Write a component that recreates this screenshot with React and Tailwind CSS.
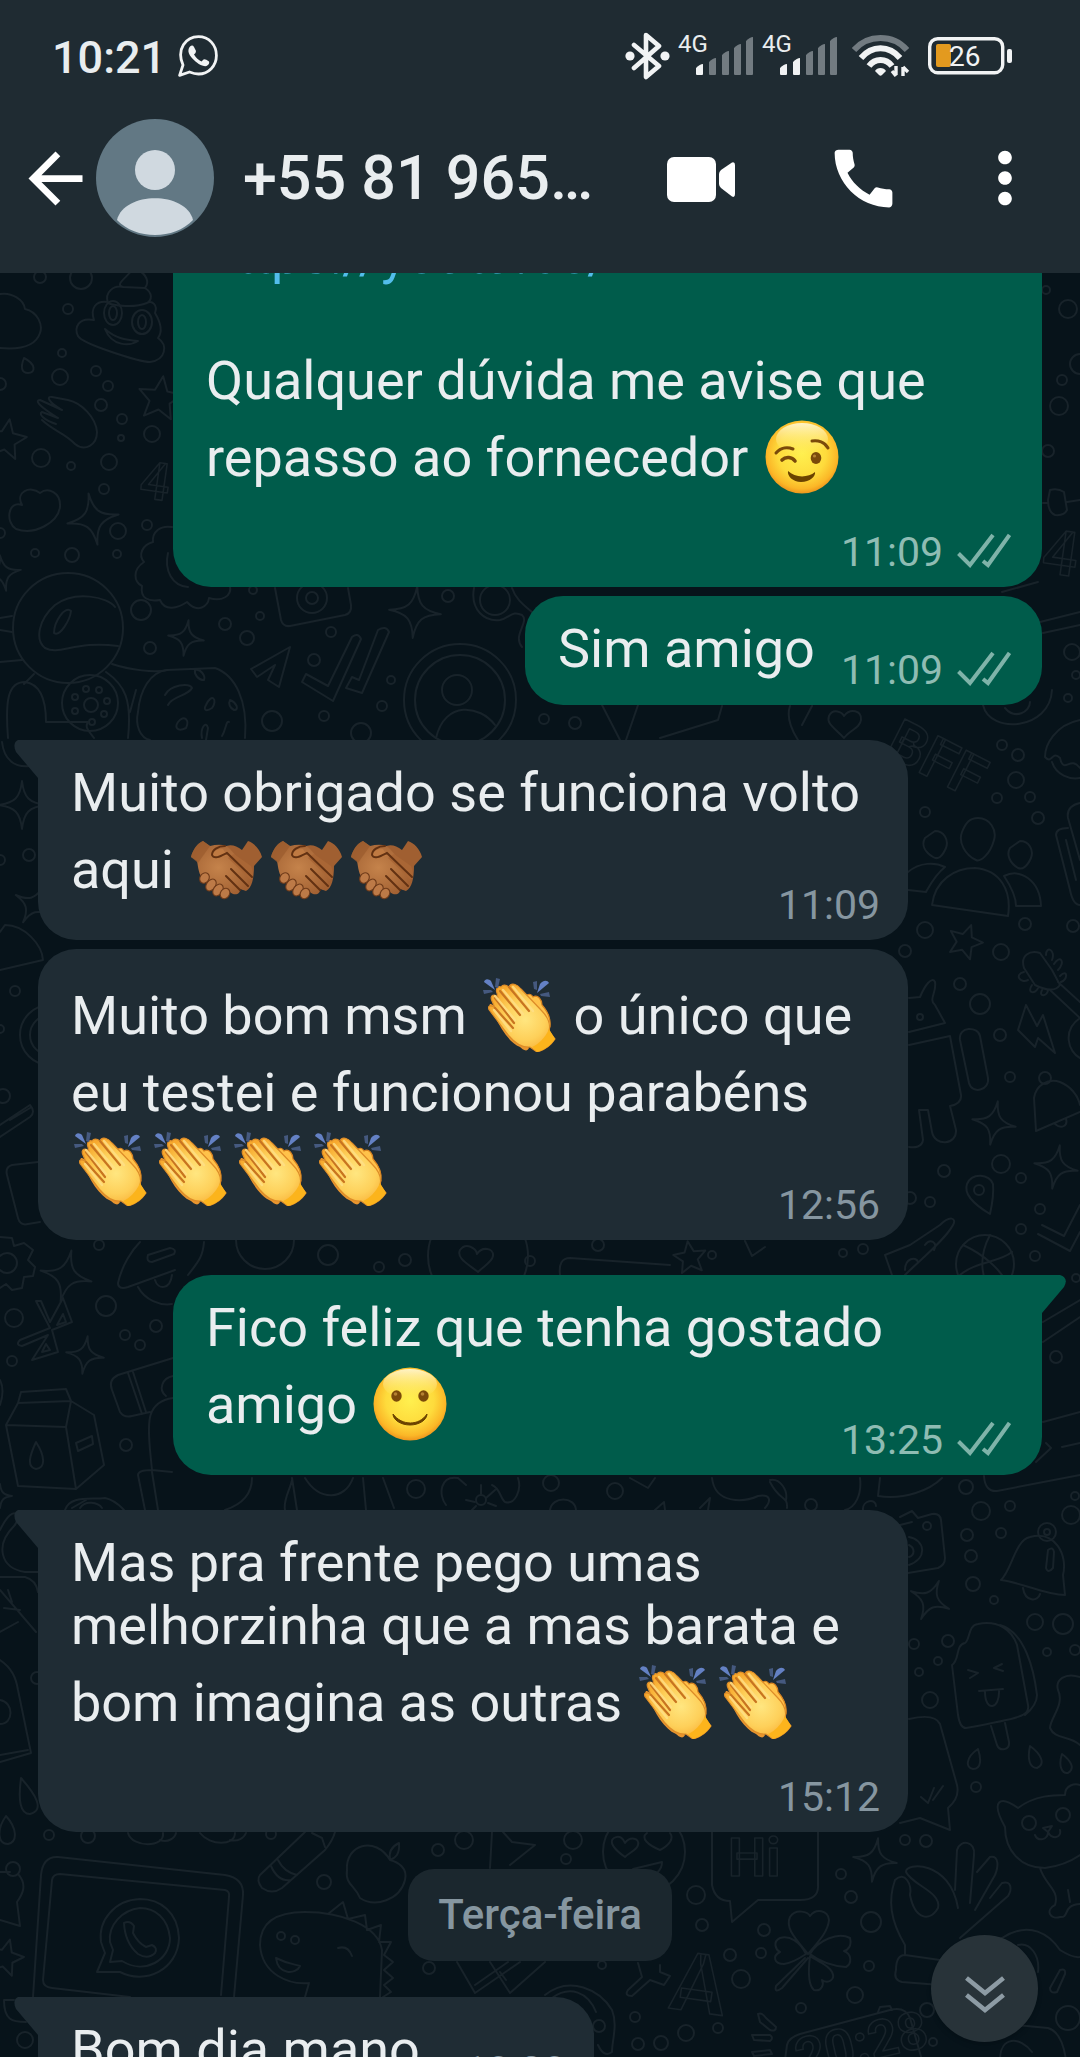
import React from "react";

// React-icons
import { MdArrowBack, MdCall, MdMoreVert } from "react-icons/md";

const RECEIVED = "received";
const SENT = "sent";

// ---------- Emojis ----------

const emojiClass = "mx-[3px] mt-[8px] mb-[9px] inline-block h-[74px] w-[74px] align-[-27px]";

const Wink = () => (
    <svg viewBox="0 0 74 74" className={emojiClass} role="img" aria-label="😉">
        <circle cx="37" cy="37" r="36.5" fill="url(#face)" />
        <ellipse cx="37" cy="19" rx="26" ry="16" fill="url(#shine)" />
        <g fill="none" stroke="#7a4a0a" strokeWidth="3" strokeLinecap="round">
            <path d="M11 33 C16 27 23 27 28 29" />
            <path d="M47 21 C53 20 60 22 63 28" />
            <path d="M17 40 C21 36 27 37 30 41" strokeWidth="3.6" />
        </g>
        <ellipse cx="51" cy="38" rx="5.3" ry="6" fill="#7a4a0a" />
        <circle cx="49.5" cy="36" r="1.6" fill="#b58233" />
        <path d="M23 51 C30 58 43 58 50 52 C51 56 45 62 36 62 C28 62 22 56 23 51Z" fill="#6b4200" />
    </svg>
);

const Smile = () => (
    <svg viewBox="0 0 74 74" className={emojiClass} role="img" aria-label="🙂">
        <circle cx="37" cy="37" r="36.5" fill="url(#face)" />
        <ellipse cx="37" cy="17" rx="27" ry="15" fill="url(#shine)" />
        <ellipse cx="23.5" cy="29" rx="5.2" ry="5.8" fill="#7a4a0a" />
        <ellipse cx="50.5" cy="29" rx="5.2" ry="5.8" fill="#7a4a0a" />
        <circle cx="22.5" cy="27" r="1.8" fill="#b58233" />
        <circle cx="49.5" cy="27" r="1.8" fill="#b58233" />
        <path d="M20 47 C29 59 46 59 54 47 C54 53 46 58 37 58 C28 58 20 53 20 47Z" fill="#6b4200" stroke="#6b4200" strokeWidth="1" strokeLinejoin="round" />
    </svg>
);

const Clap = () => (
    <svg viewBox="0 0 74 74" className={emojiClass} role="img" aria-label="👏">
        <path d="M9 32 C4 27 7 23 12 29 L36 60 L46 70 C44 75 39 71 37 69 C25 64 16 48 9 32Z" fill="#e8952f" />
        <path d="M43 25 C41 16 47 14 50 19 C55 16 59 22 59 27 C66 35 68 41 67 49 L58 56 Z" fill="#ffc24a" stroke="#d98421" strokeWidth="1.2" />
        <path d="M18 9 C20 6 23 7 26 9 C28 4 34 6 38 11 L58 32 C66 40 68 46 66 53 L72 61 C68 67 62 72 54 74 L47 69 C38 70 31 64 26 58 L7 33 C3 28 8 26 12 30 L9 23 C6 17 12 15 15 20 L14 15 C12 10 16 8 18 9Z" fill="url(#hand)" stroke="#dd8c28" strokeWidth="1.2" />
        <path d="M66 51 L72 61 C68 67 62 72 54 74 L49 69 C56 66 62 60 66 51Z" fill="#fcb41c" />
        <g fill="none" stroke="#c87420" strokeWidth="2.2" strokeLinecap="round">
            <path d="M26 9 L46 33" />
            <path d="M17 13 L37 37" />
            <path d="M12 20 L31 45" />
            <path d="M12 30 L30 50" />
        </g>
        <g fill="none" stroke="#ffe08a" strokeWidth="2.4" strokeLinecap="round" opacity=".8">
            <path d="M30 9 L50 33" />
            <path d="M20 12 L40 36" />
            <path d="M12 18 L32 42" />
            <path d="M11 32 L28 53" />
        </g>
        <g fill="#6481c4">
            <path d="M1 4 C2 0 6 1 8 3 L12 12Z" />
            <path d="M66 5 C64 1 59 3 57 6 L54 15Z" />
        </g>
        <g fill="#45597f">
            <path d="M13 0 L17 1 L15 10 L12 9Z" />
            <path d="M0 12 L8 12 L10 14 L1 16Z" />
            <path d="M50 4 L54 3 L54 12 L51 11Z" />
            <path d="M57 16 L66 14 L67 19 L58 18Z" />
        </g>
    </svg>
);

const Handshake = () => (
    <svg viewBox="0 0 74 74" className={emojiClass} role="img" aria-label="🤝🏾">
        <path d="M52 18 L58 9 C64 11 70 17 72 25 L64 34 C64 46 62 56 56 59 L30 50 L28 20 C36 11 44 12 52 18Z" fill="#a05f31" />
        <path d="M1 25 C3 17 8 11 13 9 L20 14 C28 12 36 12 40 17 L60 40 C65 48 60 50 57 48 C61 57 55 60 50 56 C51 63 44 64 40 60 L12 46 C8 40 8 33 7 29Z" fill="url(#shake)" />
        <path d="M1 25 C3 17 8 11 13 9 L20 14 L8 31Z" fill="#9a5b2e" opacity=".7" />
        <path d="M61 34 C65 44 62 48 60 47 L38 26 L44 22Z" fill="#a96635" />
        <path d="M21 23 C24 18 30 16 33 17 L37 24 C32 23 27 30 23 26 C21 25 21 24 21 23Z" fill="#bf7a42" />
        <path d="M35 14 C28 14 22 18 22 23 C24 28 31 24 37 21 L62 45 M41 37 L58 54 M36 44 L50 58" fill="none" stroke="#623112" strokeWidth="2" strokeLinecap="round" />
        <g fill="#bd7a47" stroke="#6f3b1a" strokeWidth="1.1">
            <ellipse cx="14.5" cy="46" rx="4.5" ry="5.5" transform="rotate(35 14.5 46)" />
            <ellipse cx="21" cy="53" rx="4.5" ry="6.5" transform="rotate(35 21 53)" />
            <ellipse cx="28" cy="58" rx="4.5" ry="6.5" transform="rotate(35 28 58)" />
            <ellipse cx="35" cy="61.5" rx="4.5" ry="5.5" transform="rotate(35 35 61.5)" />
        </g>
    </svg>
);

// ---------- Wallpaper ----------

// small bubbles: x, y, radius
const dots = [
    [40, 277, 6], [81, 278, 11], [68, 309, 5], [62, 353, 4], [60, 377, 8], [96, 371, 5], [108, 386, 5], [101, 405, 6],
    [122, 419, 5], [152, 434, 8], [121, 438, 3], [41, 458, 9], [109, 462, 8], [71, 466, 4], [104, 489, 5], [118, 531, 8],
    [147, 525, 5], [35, 553, 4], [72, 555, 7], [117, 554, 4], [0, 384, 6], [0, 533, 5], [141, 610, 10], [150, 648, 6],
    [225, 624, 6], [247, 638, 7], [260, 616, 4], [253, 590, 4], [448, 596, 6], [331, 632, 5], [314, 660, 6], [391, 680, 4],
    [382, 706, 5], [324, 716, 5], [272, 721, 10], [361, 733, 10], [1046, 290, 4], [1068, 309, 9], [1080, 364, 10],
    [1062, 380, 5], [1059, 406, 9], [1048, 451, 6], [1072, 652, 8], [1076, 675, 4], [1068, 698, 4], [544, 719, 5],
    [575, 723, 6], [1002, 745, 5], [1018, 755, 6], [1016, 780, 8], [997, 798, 5], [1030, 797, 5], [925, 812, 5],
    [1038, 818, 6], [925, 930, 8], [1025, 924, 6], [1001, 952, 8], [905, 951, 6], [1073, 926, 6], [960, 984, 6],
    [980, 1004, 10], [1000, 1035, 6], [1010, 1077, 5], [1001, 1164, 9], [1021, 1178, 5], [944, 1171, 6], [930, 1202, 5],
    [1040, 1209, 5], [910, 1198, 6], [1021, 1229, 5], [1035, 1256, 5], [863, 1249, 5], [843, 1253, 4], [29, 855, 6],
    [0, 860, 5], [15, 991, 5], [0, 1029, 4], [3, 1096, 7], [328, 1255, 10], [405, 1260, 6], [379, 1267, 5], [530, 1261, 5],
    [99, 1245, 5], [598, 1245, 6], [712, 1255, 4], [14, 1318, 9], [106, 1306, 10], [125, 1335, 5], [156, 1326, 6],
    [140, 1345, 5], [12, 1361, 5], [126, 1445, 6], [416, 1489, 9], [551, 1483, 8], [615, 1491, 8], [811, 1505, 6],
    [1056, 1357, 6], [1076, 1278, 4], [966, 1487, 7], [981, 1511, 9], [1010, 1506, 5], [1075, 1496, 4], [1071, 1515, 9],
    [967, 1535, 6], [1001, 1533, 5], [971, 1556, 6], [973, 1584, 7], [994, 1600, 4], [1035, 1622, 8], [1063, 1624, 10],
    [914, 1644, 5], [948, 1641, 6], [1047, 1652, 4], [1075, 1650, 5], [930, 1700, 8], [938, 1661, 4], [919, 1672, 4],
    [976, 1787, 5], [37, 1678, 6], [49, 1835, 5], [88, 1836, 7], [324, 1882, 7], [271, 1834, 5], [438, 1850, 6],
    [464, 1840, 9], [429, 1968, 6], [25, 2040, 8], [573, 1840, 9], [566, 1859, 5], [696, 1895, 9], [702, 1925, 6],
    [764, 1930, 6], [730, 1955, 6], [761, 1953, 5], [602, 1965, 4], [741, 1979, 9], [869, 1966, 5], [855, 1995, 8],
    [871, 1922, 10], [841, 1874, 5], [851, 1897, 6], [905, 1840, 5], [926, 1841, 6], [801, 2008, 5], [635, 2017, 5],
    [638, 2044, 6], [661, 2043, 7], [686, 2033, 8], [718, 2028, 5], [599, 2026, 6], [927, 2010, 7], [1068, 2018, 12],
    [933, 2042, 4],
];

// four-pointed sparkles and five-pointed stars: x, y, size, angle
const sparkles = [
    [93, 519, 26, -10], [3, 573, 18, -10], [186, 638, 18, 8], [415, 612, 26, 5], [22, 805, 24, 0], [33, 905, 20, 30],
    [66, 1276, 26, 12], [85, 1355, 19, 8], [994, 1123, 22, 10], [1056, 1167, 22, 10], [930, 1600, 21, 25], [875, 1860, 22, 8],
    [0, 1496, 12, 0],
];
const stars = [[160, 399, 23, 8], [6, 440, 21, 10], [965, 942, 18, 20], [690, 1258, 17, -8], [5, 1958, 19, 15]];

const doodles = [
    // clouds
    "M0 294 C12 292 24 300 25 309 C38 312 43 325 40 333 C36 345 22 350 0 348",
    "M22 505 C8 500 5 522 16 529 C35 536 58 522 60 507 C61 492 48 487 40 493 C30 485 15 492 22 505",
    // smiling pile
    "M123 287 C112 284 134 274 135 264 M145 288 C150 282 146 274 138 270 M108 303 C104 292 114 285 123 287 L145 288 C153 293 152 300 147 303 C135 308 115 306 108 303 M94 320 C90 308 96 300 108 302 M94 320 C78 317 74 328 78 336 C82 344 140 362 150 362 C166 360 168 345 158 338 C164 330 158 318 155 313 C158 305 152 300 147 303 M105 329 C112 347 130 346 138 341 C125 340 115 338 105 329Z",
    "M24 358 C20 368 22 373 28 373 C36 373 36 364 24 358Z",
    // hand
    "M75 444 C85 452 97 445 97 432 C96 418 82 403 68 400 L52 397 C46 396 48 402 62 410 M62 410 L40 400 C35 400 37 405 58 418 M58 418 L42 412 C38 414 44 420 56 424 M42 420 C55 432 65 433 75 444",
    // flower cookie
    "M172 527 C160 525 152 532 153 542 C142 545 138 555 144 562 C132 570 134 582 142 586 C140 598 148 602 160 600 C165 612 178 608 187 602 C198 614 208 606 209 598 C222 602 232 596 230 586 M168 553 C164 570 172 586 188 587",
    // astronaut
    "M115 607 C108 597 75 590 55 605 C38 620 35 640 45 648 C60 656 75 640 118 646 M54 633 C54 622 65 605 71 611 C70 620 60 637 54 633Z M0 662 L22 660 M0 618 L12 616 M0 630 L12 632 M8 738 C5 700 8 682 25 682 C40 684 46 700 46 722 L88 722 C84 728 90 732 94 738 M34 674 L24 684 M106 672 C125 685 132 700 128 738 M112 664 C130 670 155 673 167 670 M130 712 L136 690",
    // glazed cookie
    "M167 670 C150 672 140 690 138 712 C135 725 140 738 150 740 M167 670 L215 668 C235 675 248 700 245 738 M165 695 C170 685 190 682 192 688 C188 696 172 696 168 705 M195 670 C200 668 206 676 204 680 C198 680 194 674 195 670Z M206 705 C212 692 218 700 212 708 C206 712 203 710 206 705Z M230 700 C236 702 240 710 234 710 C230 708 228 704 230 700Z M178 722 C184 714 190 720 186 728 C178 732 174 728 178 722Z M202 738 C200 728 206 720 208 728 L206 740 M222 736 C226 730 226 720 229 722",
    // camera, plane, checks
    "M275 588 L281 620 Q283 627 290 626 L345 615 Q352 613 351 605 L348 588",
    "M251 669 L290 647 L279 687 L268 680 L275 665 L257 677Z",
    "M306 674 L328 686 L352 637 Q358 632 361 639 L333 701 L302 682Z M352 677 L359 680 L378 630 Q386 625 389 632 L362 693 L346 688Z",
    "M436 738 C445 700 480 705 495 725",
    // planet ring
    "M474 588 C470 610 485 622 500 620 C510 618 512 610 522 615 C530 622 512 635 522 647 M512 588 C516 600 525 606 532 612",
    "M602 705 L620 740 M638 705 L626 740 M660 738 L718 720 L722 706 M790 706 C785 720 795 735 798 740 M812 706 L802 725",
    "M844 738 C835 728 826 724 829 716 C833 708 842 712 844 716 C850 708 862 710 861 720 C860 728 850 730 844 738Z",
    // right edge
    "M1050 490 Q1058 488 1064 492 L1067 510 Q1064 516 1055 515 Q1048 512 1048 500Z M1043 503 L1048 503 M1067 502 L1080 500 M1002 592 L1038 582 M1040 622 L1080 612 M1043 633 L1080 625",
    "M983 705 C990 735 1050 730 1052 690 M1005 708 C1015 720 1030 712 1030 702",
    "M1080 720 C1055 725 1045 745 1045 757 C1052 765 1052 750 1060 758 C1064 775 1070 755 1080 768 M1052 762 C1056 775 1070 780 1080 778",
    // people
    "M932 905 C935 880 955 868 975 868 C1000 870 1012 890 1008 916Z M908 872 C920 862 935 862 945 867 C935 875 930 885 926 892 L908 890 M1004 876 C1020 868 1040 880 1041 906 L1016 906 C1016 895 1010 885 1004 876Z",
    "M1080 905 C1075 905 1072 900 1070 890 L1056 835 Q1056 828 1068 828 M1080 803 Q1066 806 1068 818 L1080 860 M1066 840 L1076 880",
    // guitar
    "M1024 968 C1020 955 1030 950 1040 953 L1052 970 L1060 985 C1055 992 1045 990 1035 985Z M1050 990 L1080 1018 M1058 982 L1080 1002 M1046 955 C1046 945 1056 950 1052 960 M1054 964 C1060 954 1066 962 1058 970 M1060 976 C1068 968 1068 980 1061 982 M1024 972 C1014 974 1020 984 1028 980 M1032 985 C1026 994 1036 994 1038 988 M1042 990 C1038 998 1048 996 1048 990 M1080 1018 C1062 1030 1068 1052 1080 1058",
    "M1026 1005 L1018 1030 L1035 1047 L1038 1038 L1055 1053 L1043 1015 L1037 1026Z",
    "M909 998 L920 997 C925 985 932 976 935 982 C937 992 928 1000 935 1005 L945 1023 L909 1032 M909 1045 L950 1036 L961 1095 C962 1103 955 1105 950 1106 L956 1130 C957 1145 935 1147 932 1132 L928 1110 L919 1110 L923 1140 C922 1147 915 1148 909 1147",
    "M960 1040 C958 1026 978 1026 980 1036 L988 1078 C990 1090 972 1095 969 1083Z",
    "M1036 1131 L1034 1098 C1036 1085 1048 1078 1060 1082 C1070 1086 1078 1095 1080 1105 M1036 1131 L1080 1112 M1055 1124 C1062 1130 1068 1125 1066 1119",
    "M990 1214 C975 1205 963 1195 967 1184 C972 1172 990 1174 993 1184 C994 1195 992 1205 990 1214Z",
    "M1042 1225 L1064 1236 L1080 1205 M1038 1234 L1070 1251 L1080 1232",
    "M885 1255 L910 1245 L940 1225 C950 1215 957 1218 953 1225 C945 1240 920 1260 905 1275 M885 1255 L892 1275 M925 1245 C930 1238 938 1242 934 1250 M905 1270 C905 1258 916 1256 918 1262",
    "M963 1245 C985 1255 1000 1270 1005 1280 M960 1275 C975 1262 1000 1262 1012 1252 M990 1235 C982 1250 980 1265 985 1280",
    // left edge
    "M0 970 L43 960 C42 945 25 925 5 925 L0 932 M0 1125 L30 1105 Q36 1112 30 1117 L0 1137 M10 1120 L30 1108 M38 1162 L12 1165 Q5 1167 7 1175 L18 1218 Q20 1226 28 1224 L40 1222",
    "M2 742 C4 760 15 768 30 766",
    "M0 1237 L12 1238 L14 1246 L24 1243 L33 1250 L28 1260 L35 1267 L33 1276 L24 1277 L22 1288 L12 1290 L6 1284 L0 1288",
    "M118 1283 C122 1265 132 1250 140 1242 M118 1283 Q118 1290 128 1287 L175 1270 M204 1242 C203 1255 200 1260 188 1275 M148 1255 L170 1248 Q177 1249 174 1254 L152 1262 Q146 1262 148 1255Z M155 1280 C158 1290 170 1290 172 1275 M138 1287 C145 1300 160 1306 172 1304",
    "M560 1275 Q558 1258 570 1258 L670 1265 M745 1241 L752 1256 L765 1247 M478 1272 C468 1264 456 1258 460 1250 C466 1242 476 1248 477 1254 C482 1246 494 1248 493 1256 C492 1262 484 1266 478 1272Z",
    "M36 1301 L50 1328 L20 1340 Q15 1345 22 1346 L48 1335 L32 1360 L58 1352 L52 1330 L72 1322 L63 1298 L50 1322 L41 1301 Z M57 1325 L63 1314 L66 1322Z M42 1352 L46 1344 L50 1350Z",
    // flashlight and milk box
    "M173 1358 L118 1375 Q108 1380 112 1390 L120 1412 Q124 1418 132 1416 L150 1412 M128 1373 L142 1414 M133 1372 L146 1412 M173 1376 C162 1378 158 1390 166 1396 M173 1398 C145 1402 148 1425 150 1450 L152 1470 L172 1472 M138 1475 Q138 1470 152 1470 M138 1475 L145 1510 M152 1472 L158 1510",
    "M18 1403 L21 1392 L66 1389 L71 1401 L18 1403 L6 1425 L66 1427 L71 1401 L94 1415 L104 1465 L76 1489 L66 1427 M6 1425 L18 1486 L76 1489 M36 1442 C30 1455 26 1467 36 1469 C46 1468 45 1456 36 1442Z M76 1443 L92 1436 L93 1444 L78 1451Z M0 1380 Q5 1390 0 1405",
    "M65 1510 C70 1495 90 1500 105 1498 C115 1500 120 1506 124 1510 M72 1508 L86 1500 M80 1508 C85 1500 98 1502 102 1508",
    "M252 1478 C252 1495 240 1505 225 1510 M292 1478 L297 1510 M285 1510 C283 1500 290 1490 292 1480 M305 1478 C320 1502 345 1500 353 1478 M363 1478 L366 1510 M383 1478 L394 1508",
    "M458 1478 C440 1475 438 1495 446 1505 M458 1478 L466 1485 M518 1478 C522 1490 515 1505 505 1502 C500 1498 500 1488 492 1485 M466 1500 L475 1502 M481 1485 L481 1494 M495 1490 L486 1498 M472 1510 L476 1506 M496 1506 L488 1503",
    "M712 1478 C715 1505 745 1502 758 1496 C770 1494 772 1500 765 1508 M770 1482 C780 1502 788 1495 787 1508 M770 1480 C780 1478 788 1490 786 1500 M860 1478 C862 1495 855 1508 845 1510 M880 1478 L878 1496 C905 1500 930 1490 942 1478 M863 1510 C862 1500 876 1498 876 1506 M630 1478 L648 1488 L655 1478 M550 1510 C552 1496 575 1496 576 1510 M655 1510 L664 1502 L665 1510 M700 1508 L710 1498 L708 1510",
    "M0 1530 C15 1500 22 1518 14 1526 C-5 1545 0 1568 25 1572 L38 1572 M0 1577 L25 1577 Q36 1580 38 1592 M0 1590 L36 1632 M8 1590 L12 1602 M4 1608 L20 1610 M0 1632 L18 1622",
    "M1043 1322 L1080 1300 M1043 1342 L1080 1317 M1043 1422 L1080 1412 M1036 1462 L1051 1448 L1046 1443 M1062 1447 L1080 1443 M984 1476 Q985 1492 997 1491 L1080 1475",
    // camera and bell
    "M900 1517 L912 1511 L918 1518 L932 1514 Q940 1513 941 1520 L945 1558 Q945 1565 938 1568 L908 1573 M900 1525 L912 1522 M909 1537 C925 1540 928 1558 909 1565 M909 1545 C915 1548 915 1555 909 1557",
    "M1001 1580 C1012 1570 1015 1540 1030 1537 C1055 1530 1068 1555 1063 1575 L1065 1595 C1045 1595 1020 1582 1001 1580Z M1023 1588 C1025 1602 1038 1602 1040 1594 M1048 1550 Q1053 1546 1054 1552 L1053 1568 Q1048 1574 1046 1568Z",
    // ice cream
    "M965 1643 C970 1640 968 1625 978 1624 C998 1620 1012 1630 1017 1645 L1028 1705 C1030 1716 1020 1718 966 1728 Q960 1728 958 1715 L952 1665 C960 1660 955 1645 965 1643Z M1000 1625 C1025 1632 1034 1670 1037 1695 Q1037 1705 1025 1715 M968 1670 L978 1673 L970 1678 M1002 1664 L994 1668 L1003 1671 M979 1691 L1003 1689 M985 1692 C985 1712 1000 1710 999 1690 M991 1726 L997 1745 C1000 1752 1010 1750 1009 1742 L1005 1723",
    "M1080 1677 C1065 1672 1055 1680 1058 1690 C1065 1705 1050 1718 1050 1728 C1055 1740 1070 1735 1080 1745",
    "M978 1749 C966 1757 965 1768 973 1769 C982 1769 981 1758 978 1749Z M1030 1746 C1027 1760 1030 1768 1037 1768 C1046 1764 1041 1754 1030 1746Z M1062 1754 C1058 1766 1062 1774 1068 1773 C1076 1768 1070 1760 1062 1754Z",
    "M909 1719 Q935 1713 940 1724 L957 1785 Q960 1798 948 1808 L950 1830 L920 1818 L900 1823 M921 1797 L928 1803 L934 1788 M933 1800 L943 1786",
    // cat
    "M1005 1827 C990 1800 1000 1795 1018 1808 C1035 1795 1055 1795 1065 1795 C1065 1785 1075 1783 1080 1785 M1005 1827 C1005 1850 1020 1868 1045 1868 C1060 1866 1070 1862 1080 1855 M1035 1835 C1038 1842 1048 1840 1048 1832 C1052 1840 1062 1838 1060 1830 M1043 1828 L1052 1826 L1048 1832Z M1040 1868 C1045 1885 1060 1890 1055 1905 C1045 1910 1050 1920 1060 1917 C1070 1918 1062 1905 1080 1904 M1068 1890 L1070 1902",
    "M0 1660 C12 1668 16 1678 18 1690 L31 1753 L0 1762 M0 1755 L28 1750 M0 1700 C14 1702 14 1724 0 1724",
    "M21 1778 C18 1800 20 1814 30 1814 C45 1810 36 1795 21 1778Z M6 1816 C-4 1830 -2 1844 8 1844 C18 1842 17 1828 6 1816Z",
    "M128 1833 C132 1848 165 1848 163 1833 M160 1840 C168 1843 175 1838 176 1833 M200 1833 C210 1846 235 1846 235 1833 M230 1840 C238 1842 244 1838 246 1833",
    // crayon, apple
    "M305 1832 L260 1875 Q256 1880 262 1888 Q272 1895 282 1888 L325 1850 Q333 1840 335 1832 M271 1866 Q278 1882 291 1880 M278 1860 Q284 1872 297 1875 M312 1833 L322 1838 L325 1847",
    "M390 1860 C375 1835 345 1845 347 1870 C345 1885 355 1885 360 1898 C375 1908 400 1900 405 1880 C408 1868 398 1862 390 1860 C388 1850 395 1845 399 1843 C400 1855 395 1858 390 1860",
    "M492 1832 L490 1868 M503 1832 L512 1842 L535 1845 L510 1865",
    // tablet with a chat logo
    "M33 1997 L41 1875 Q43 1856 58 1857 L225 1875 Q244 1878 243 1895 L234 1997 M43 1980 L52 1880 Q53 1874 60 1874 L225 1890 Q230 1891 229 1897 L221 1995 M43 1980 Q43 1987 52 1988 L130 1997",
    "M105 1953 L97 1972 L120 1972 C145 1985 178 1970 179 1938 C178 1912 160 1899 140 1899 C115 1900 98 1920 101 1942 Q103 1948 105 1953Z M113 1950 L110 1962 L122 1961 C145 1975 170 1960 170 1938 C168 1918 155 1908 140 1908 C122 1910 108 1925 110 1942Z M124 1923 Q130 1920 134 1926 L133 1933 Q138 1943 146 1947 L152 1945 Q158 1948 155 1953 Q148 1960 138 1954 Q125 1943 124 1923Z",
    "M0 1872 L10 1872 M18 1874 C28 1885 22 1895 17 1902 L20 1926 L0 1920 M4 2000 C4 2020 12 2022 26 2022 M4 2000 L14 2000",
    // dinosaur
    "M309 1983 C290 1985 262 1975 260 1945 C260 1920 280 1912 305 1912 C340 1912 378 1925 382 1950 L380 1997 M309 1983 L305 1997 M328 1914 L343 1902 L348 1919 L365 1915 L367 1930 L381 1925 L379 1942 L391 1942 L384 1955 L393 1962 L384 1970 L393 1978 L384 1985 L391 1992 L383 1997 M276 1958 C290 1965 295 1964 300 1966 C296 1975 278 1975 276 1958Z M338 1948 Q348 1945 352 1956",
    "M457 1962 L475 1993 L520 1962 M475 1985 L508 1962 M490 1962 L510 1993 L545 1962 M500 1972 L506 1980",
    // smiley with heart eyes
    "M625 1857 C615 1850 608 1842 614 1838 C620 1834 624 1840 625 1843 C630 1836 640 1838 638 1845 C637 1850 630 1852 625 1857Z M660 1850 C648 1845 640 1838 647 1833 M660 1850 C670 1845 674 1838 670 1833 M633 1869 L662 1862 C662 1870 655 1876 650 1876",
    "M712 1832 L712 1885 Q715 1901 730 1901 L732 1922 L758 1900 L800 1900 Q819 1900 818 1885 L818 1832",
    // clover
    "M808 1954 C795 1938 785 1928 790 1917 C796 1908 808 1912 810 1916 C816 1908 828 1910 829 1920 C828 1932 818 1942 808 1954Z M806 1954 C800 1942 790 1935 780 1938 C772 1942 776 1950 780 1952 C772 1956 774 1964 784 1964 C792 1963 800 1958 806 1954Z M810 1954 C818 1940 838 1932 850 1938 C852 1946 848 1950 844 1951 C852 1954 852 1964 846 1967 C830 1966 818 1960 810 1954Z M810 1956 C808 1972 808 1985 814 1990 C822 1992 824 1984 822 1980 C828 1984 836 1980 832 1972 C828 1964 818 1962 810 1956Z M805 1958 L776 1986 Q774 1994 782 1988 L808 1958",
    "M628 1990 L642 1977 L638 1963 M660 1965 L660 1972 L670 1976 L664 1985 L650 1980 L632 1996 Q624 1996 628 1990 M545 1995 C570 1975 600 1990 612 2010 C618 2025 612 2040 612 2052 Q604 2058 598 2045 M552 1998 C570 1985 588 1992 596 2012",
    // ok hand
    "M895 1880 C888 1900 890 1920 905 1945 L905 1955 M895 1880 C905 1870 912 1885 910 1895 C915 1920 930 1922 938 1908 C942 1892 912 1885 906 1872 C905 1862 950 1860 958 1908 M955 1890 L957 1850 C961 1838 976 1842 974 1855 L970 1903 M977 1872 L990 1857 C1000 1855 998 1868 995 1875 L975 1910 M990 1898 L1002 1883 C1012 1880 1012 1890 1008 1896 L960 1938 M940 1960 L905 1955 Q896 1955 896 1970 Q893 1980 902 1982 L940 1985",
    "M785 2060 L787 2045 Q788 2038 800 2034 L890 2010 Q905 2006 910 2018 L922 2060 M878 2012 L880 2007 L890 2006 L892 2010",
    "M758 2014 Q762 2012 766 2018 L776 2027 Q776 2032 770 2030 L760 2022Z M752 2035 L770 2035 Q774 2038 770 2041 L754 2040Z M752 2052 L770 2050 L772 2054 L754 2056Z",
    "M1002 1938 C1030 1920 1050 1935 1060 1950 C1068 1955 1075 1958 1080 1957 M1018 1945 C1030 1942 1040 1955 1038 1972 M1060 1970 Q1066 1968 1065 1974 L1057 1992 Q1050 1994 1050 1988Z M1000 2060 C1000 2036 1020 2036 1032 2052 M1015 2025 L1048 2028 Q1062 2032 1066 2060",
];

const sparklePath = "M0 -1 C.08 -.3 .3 -.08 1 0 C.3 .08 .08 .3 0 1 C-.08 .3 -.3 .08 -1 0 C-.3 -.08 -.08 -.3 0 -1Z";
const starPath = "M0 -1 L.27 -.37 L.95 -.31 L.44 .14 L.59 .81 L0 .46 L-.59 .81 L-.44 .14 L-.95 -.31 L-.27 -.37Z";

const Wallpaper = () => (
    <svg viewBox="0 0 1080 2057" preserveAspectRatio="xMidYMin slice" className="absolute inset-0 h-full w-full" aria-hidden="true">
        <defs>
            <radialGradient id="face" cx=".5" cy=".45" r=".55">
                <stop offset="0" stopColor="#fff04f" />
                <stop offset=".6" stopColor="#fedb3c" />
                <stop offset=".88" stopColor="#fbb727" />
                <stop offset="1" stopColor="#ee951d" />
            </radialGradient>
            <linearGradient id="shine" x1="0" y1="0" x2="0" y2="1">
                <stop offset="0" stopColor="#fff6cf" stopOpacity=".95" />
                <stop offset="1" stopColor="#ffe96a" stopOpacity="0" />
            </linearGradient>
            <radialGradient id="hand" cx=".55" cy=".52" r=".55">
                <stop offset="0" stopColor="#ffe680" />
                <stop offset=".55" stopColor="#fed05a" />
                <stop offset="1" stopColor="#f7a92e" />
            </radialGradient>
            <radialGradient id="shake" cx=".45" cy=".5" r=".6">
                <stop offset="0" stopColor="#c5834b" />
                <stop offset="1" stopColor="#a05f31" />
            </radialGradient>
        </defs>
        <g fill="none" stroke="#18232a" strokeWidth="2" strokeLinejoin="round" strokeLinecap="round">
            {dots.map(([x, y, r], i) => (
                <circle key={i} cx={x} cy={y} r={r} />
            ))}
            {sparkles.map(([x, y, s, a], i) => (
                <path key={i} d={sparklePath} transform={`translate(${x} ${y}) rotate(${a}) scale(${s})`} strokeWidth={2 / s} />
            ))}
            {stars.map(([x, y, s, a], i) => (
                <path key={i} d={starPath} transform={`translate(${x} ${y}) rotate(${a}) scale(${s})`} strokeWidth={2 / s} />
            ))}
            {doodles.map((d, i) => (
                <path key={i} d={d} />
            ))}
            <ellipse cx="113" cy="313" rx="9" ry="12" />
            <ellipse cx="113" cy="313" rx="4" ry="7" />
            <ellipse cx="142" cy="322" rx="10" ry="12" />
            <ellipse cx="142" cy="322" rx="4" ry="7" />
            <circle cx="68" cy="628" r="55" />
            <circle cx="90" cy="703" r="28" />
            <circle cx="91" cy="705" r="7" />
            {[[86, 689], [99, 690], [75, 697], [107, 701], [75, 711], [104, 714], [92, 722]].map(([x, y]) => (
                <circle key={x + "-" + y} cx={x} cy={y} r="3" />
            ))}
            <circle cx="312" cy="598" r="15" />
            <circle cx="312" cy="598" r="6" />
            <circle cx="495" cy="600" r="15" />
            <circle cx="460" cy="700" r="56" />
            <circle cx="460" cy="700" r="45" />
            <circle cx="457" cy="690" r="15" />
            <path d="M978 818 C990 818 997 830 994 840 C990 855 980 862 976 860 C965 855 958 842 962 832 C966 822 970 818 978 818Z M935 831 C944 831 949 840 946 848 C942 857 938 860 933 857 C925 852 921 845 925 838Z M1020 841 C1029 841 1034 850 1031 858 C1027 867 1022 870 1018 868 C1010 863 1006 855 1010 848Z" />
            <circle cx="920" cy="1017" r="3" />
            <circle cx="1045" cy="1078" r="6" />
            <circle cx="979" cy="1190" r="5" />
            <circle cx="985" cy="1264" r="29" />
            <circle cx="50" cy="1035" r="30" />
            <circle cx="50" cy="1035" r="20" />
            <circle cx="7" cy="1263" r="10" />
            <circle cx="265" cy="1240" r="29" />
            <circle cx="478" cy="1256" r="50" />
            <circle cx="481" cy="1500" r="5" />
            <circle cx="927" cy="1526" r="4" />
            <circle cx="1047" cy="1532" r="9" />
            <circle cx="1047" cy="1532" r="3" />
            <circle cx="1029" cy="1823" r="7" />
            <circle cx="1063" cy="1815" r="7" />
            <circle cx="13" cy="1869" r="7" />
            <circle cx="281" cy="1936" r="4" />
            <circle cx="295" cy="1940" r="4" />
            <circle cx="644" cy="1852" r="41" />
            <g className="font-[Roboto,sans-serif] font-bold" strokeWidth="1.6">
                <text x="138" y="497" fontSize="52" transform="rotate(8 138 497)">4</text>
                <text x="1040" y="572" fontSize="62" transform="rotate(8 1040 572)">4</text>
                <text x="883" y="754" fontSize="58" transform="rotate(27 883 754)">BFF</text>
                <text x="728" y="1876" fontSize="54">Hi</text>
                <text x="668" y="2008" fontSize="82" transform="rotate(8 668 2008)">A</text>
                <text x="800" y="2076" fontSize="52" transform="rotate(-13 800 2076)">20:28</text>
            </g>
        </g>
    </svg>
);

// ---------- Header ----------

const Signal = ({ level }) => {
    const bars = [[18, 65], [31, 59], [44, 52], [56, 45], [68, 38]];
    return (
        <svg viewBox="0 0 76 44" className="h-[44px] w-[76px] overflow-visible" aria-hidden="true">
            <text x="0" y="18" fontSize="24" fill="#e9edef" className="font-[Roboto,sans-serif]">4G</text>
            {bars.map(([x, top], i) => (
                <path
                    key={x}
                    d={`M${x} ${top - 31} Q${x + 4} ${top - 35} ${x + 7} ${top - 35} V40 Q${x + 7} 41 ${x + 6} 41 H${x + 1} Q${x} 41 ${x} 40Z`}
                    fill={i < level ? "#f1f3f4" : "#727b81"}
                />
            ))}
        </svg>
    );
};

const StatusBar = () => (
    <div className="flex h-[112px] items-center pl-[52px] pr-[66px] text-[#e9edef]">
        <time className="pt-[3px] text-[45px] leading-none font-medium">10:21</time>
        <svg viewBox="0 0 40 42" className="ml-[12px] h-[42px] w-[40px]" role="img" aria-label="WhatsApp">
            <path d="M1.6 40.4 L5 30 C-2 14 8 1.6 20.500 1.600 C31 1.600 38.400 10 38.400 20.500 C38.400 31 30.500 39 20.500 39 C17 39 14 38 11.500 37Z" fill="none" stroke="#f1f3f4" strokeWidth="2.8" strokeLinejoin="round" />
            <path d="M12 11.500 Q14.500 9.500 16 12 L18 16 Q18 18 16 19.500 Q19 24.500 23.500 26.500 L25.500 24.500 Q27 23.500 31 26.500 Q32 29 28.500 31 Q24 32 17.500 26.500 Q7 17.500 12 11.500Z" fill="#f1f3f4" />
        </svg>
        <div className="ml-auto flex items-center">
            <svg viewBox="0 0 45 48" className="h-[48px] w-[45px]" role="img" aria-label="Bluetooth">
                <path d="M9 13 L34 34 L21 45 V3 L34 14 L9 36" fill="none" stroke="#f1f3f4" strokeWidth="4.600" strokeLinejoin="round" strokeLinecap="round" />
                <circle cx="5" cy="24" r="4.600" fill="#f1f3f4" />
                <circle cx="40" cy="24" r="4.600" fill="#f1f3f4" />
            </svg>
            <div className="ml-2 flex gap-2">
                <Signal level={1} />
                <Signal level={2} />
            </div>
            <svg viewBox="0 0 58 44" className="ml-[14px] h-[44px] w-[58px]" role="img" aria-label="Wi-Fi">
                <g fill="none" strokeWidth="6">
                    <path d="M2 16 C16 0 41 0 55 16" stroke="#727b81" />
                    <path d="M9 24 C20 11 37 11 48 24" stroke="#f1f3f4" />
                    <path d="M17 32 C23 24 34 24 40 32" stroke="#f1f3f4" />
                </g>
                <path d="M23 37 C25 33 32 33 34 37 L30 41 Q28.500 42.500 27 41Z" fill="#f1f3f4" />
                <path d="M44 32 V41 M44 42 L40 37 M51 42 V33 M51 33 L56 38" fill="none" stroke="#f1f3f4" strokeWidth="3.400" />
            </svg>
            <svg viewBox="0 0 86 38" className="ml-[18px] h-[38px] w-[86px]" role="img" aria-label="26%">
                <rect x="1.700" y="1.700" width="73" height="34" rx="8" fill="none" stroke="#f1f3f4" strokeWidth="3.400" />
                <rect x="79" y="12" width="5" height="14" rx="2" fill="#f1f3f4" />
                <rect x="8" y="7" width="15" height="23" rx="2" fill="#e39a1f" />
                <text x="21" y="29" fontSize="28" fill="#f1f3f4" className="font-[Roboto,sans-serif]">26</text>
            </svg>
        </div>
    </div>
);

const ChatHeader = () => (
    <header className="relative z-10 shrink-0 bg-[#1f2b32] pb-[29px]">
        <StatusBar />
        <div className="flex h-[132px] items-center pl-[15px] pr-[34px] text-white">
            <button aria-label="Voltar">
                <MdArrowBack className="size-[81px]" />
            </button>
            <svg viewBox="0 0 118 118" className="size-[118px] shrink-0 rounded-full bg-[#627884]" aria-hidden="true">
                <ellipse cx="59" cy="51" rx="20" ry="20" fill="#d0d9e0" />
                <path d="M21 101 C28 72 90 72 97 101 C78 121 40 121 21 101Z" fill="#d0d9e0" />
            </svg>
            <h1 className="ml-[29px] min-w-0 flex-1 truncate text-[61px] leading-[72px] font-medium text-[#e9edef]">+55 81 965…</h1>
            <button aria-label="Chamada de vídeo">
                <svg viewBox="0 0 68 48" className="h-[48px] w-[68px]">
                    <rect y="3" width="49" height="45" rx="7" fill="currentColor" />
                    <path d="M52 20 Q52 18 54 16 L65 8.500 Q68 7.500 68 11 V40 Q68 44 65 42.500 L54 34 Q52 32 52 30Z" fill="currentColor" />
                </svg>
            </button>
            <button aria-label="Ligar" className="ml-[90px]">
                <MdCall className="size-[77px]" />
            </button>
            <button aria-label="Mais opções" className="ml-[62px]">
                <MdMoreVert className="size-[82px]" />
            </button>
        </div>
    </header>
);

// ---------- Messages ----------

const Checks = () => (
    <svg viewBox="0 0 54 35" className="mb-1 h-[35px] w-[54px]" role="img" aria-label="Entregue">
        <path d="M1.500 20.500 L13 32 L36 2 M26 28 L31 32 L52.500 2" fill="none" stroke="#7fb3a9" strokeWidth="4" />
    </svg>
);

const Tail = ({ from }) =>
    from === SENT ? (
        <svg viewBox="0 0 24 38" className="absolute top-0 left-full h-[38px] w-[24px] text-[#005c4b]" aria-hidden="true">
            <path d="M-1 0 H18 Q27 3 22 12 L0 38 H-1Z" fill="currentColor" />
        </svg>
    ) : (
        <svg viewBox="0 0 24 38" className="absolute top-0 right-full h-[38px] w-[24px] text-[#1f2c34]" aria-hidden="true">
            <path d="M25 0 H4 Q-2 3 2 12 L24 38 H25Z" fill="currentColor" />
        </svg>
    );

const Time = ({ from, className = "", children }) => (
    <span className={`flex items-center justify-end gap-[14px] text-[41px] leading-[48px] ${from === SENT ? "text-[#8fbcb3]" : "text-[#8696a0]"} ${className}`}>
        <time>{children}</time>
        {from === SENT && <Checks />}
    </span>
);

// layout: "inline" puts the time next to a one-line text, "below" gives it a row,
// otherwise it floats at the end of the last line
const Bubble = ({ from, time, tail, layout, className = "", children }) => {
    const side = from === SENT ? "self-end bg-[#005c4b] pr-[31px]" : "self-start bg-[#1f2c34] pr-[28px]";
    const width = layout === "inline" ? "flex items-end" : from === SENT ? "ml-[135px]" : "mr-[134px]";
    const corner = tail ? (from === SENT ? "rounded-tr-none" : "rounded-tl-none") : "";
    return (
        <article className={`relative rounded-[38px] pt-[21px] pb-[11px] pl-[33px] ${side} ${width} ${corner} ${className}`}>
            {tail && <Tail from={from} />}
            <p className={`flow-root text-[54px] leading-[63px] text-[#e9edef] ${layout === "inline" ? "mb-[14px]" : ""}`}>
                {children}
                {!layout && <Time from={from} className="float-right mt-[57px]">{time}</Time>}
            </p>
            {layout && <Time from={from} className={layout === "below" ? "mt-[25px]" : ""}>{time}</Time>}
        </article>
    );
};

const App = () => {
    return (
        <div className="flex h-screen flex-col overflow-hidden bg-[#07131a] font-[Roboto,sans-serif]">
            <Wallpaper />
            <ChatHeader />

            <main className="relative flex min-h-0 flex-1 flex-col overflow-hidden px-[38px]">
                {/* Messages of the previous day */}
                <section className="-mt-[71px] flex shrink-0 flex-col gap-[35px]">
                    <div className="flex flex-col gap-[9px]">
                        <Bubble from={SENT} time="11:09" layout="below">
                            <a href="https://youtu.be/" className="text-[#53bdeb]">https://youtu.be/</a>
                            <br />
                            <br />
                            Qualquer dúvida me avise que repasso ao fornecedor <Wink />
                        </Bubble>
                        <Bubble from={SENT} time="11:09" layout="inline" className="gap-[26px]">
                            Sim amigo
                        </Bubble>
                    </div>
                    <div className="flex flex-col gap-[9px]">
                        <Bubble from={RECEIVED} time="11:09" tail>
                            Muito obrigado se funciona volto aqui <Handshake /><Handshake /><Handshake />
                        </Bubble>
                        <Bubble from={RECEIVED} time="12:56">
                            Muito bom msm <Clap /> o único que eu testei e funcionou parabéns <Clap /><Clap /><Clap /><Clap />
                        </Bubble>
                    </div>
                    <Bubble from={SENT} time="13:25" tail>
                        Fico feliz que tenha gostado amigo <Smile />
                    </Bubble>
                    <Bubble from={RECEIVED} time="15:12" tail layout="below">
                        Mas pra frente pego umas melhorzinha que a mas barata e bom imagina as outras <Clap /><Clap />
                    </Bubble>
                </section>

                {/* Day divider */}
                <h2 className="mt-[37px] shrink-0 self-center rounded-[26px] bg-[#1b272e] px-[30px] text-[42px] leading-[92px] font-medium text-[#8696a0]">
                    Terça-feira
                </h2>

                <section className="mt-[36px] flex shrink-0 flex-col">
                    <Bubble from={RECEIVED} time="10:20" tail layout="inline" className="gap-[44px]">
                        Bom dia mano
                    </Bubble>
                </section>
            </main>

            {/* Jump to the newest message */}
            <button
                aria-label="Ir para o fim"
                className="absolute right-[42px] bottom-[15px] z-10 grid size-[107px] place-items-center rounded-full bg-[#283339] text-[#8d9ba4] shadow-md"
            >
                <svg viewBox="0 0 40 37" className="mt-3 h-[37px] w-[40px]" fill="none" stroke="currentColor" strokeWidth="4.600">
                    <path d="M1.500 2 L20 17 L38.500 2 M1.500 19 L20 34 L38.500 19" />
                </svg>
            </button>
        </div>
    );
};

export default App;
